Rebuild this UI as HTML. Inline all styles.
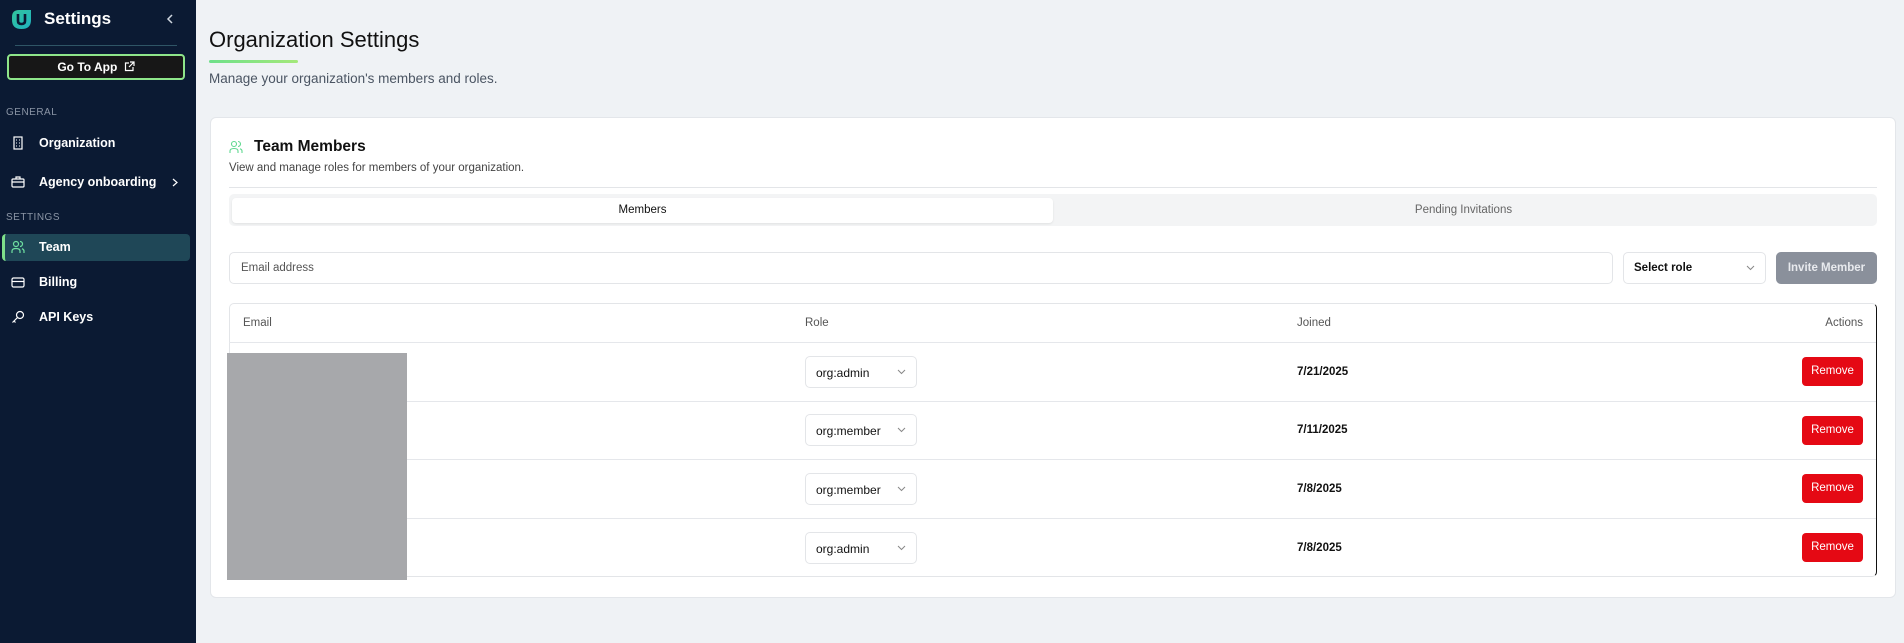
<!DOCTYPE html>
<html><head><meta charset="utf-8"><style>
*{box-sizing:border-box;margin:0;padding:0}
body{width:1904px;height:643px;overflow:hidden;background:#eff2f5;font-family:"Liberation Sans",sans-serif;position:relative}
.sb{position:absolute;left:0;top:0;width:196px;height:643px;background:#0b1a33;color:#fff}
.abs{position:absolute}
.lbl{font-size:10px;color:#8b95a5;letter-spacing:.5px}
.nav{position:absolute;left:39px;font-size:12.5px;font-weight:bold;color:#fff}
.ico{position:absolute;left:11px;width:14px;height:14px}
.card{position:absolute;left:210px;top:117px;width:1686px;height:481px;background:#fff;border:1px solid #e3e6ea;border-radius:6px}
.row{position:absolute;left:229px;width:1647px;border-top:1px solid #e5e7eb}
.sel{position:absolute;left:805px;width:112px;height:32px;border:1px solid #e3e5e8;border-radius:5px;font-size:12px;color:#111;padding:9px 0 0 10px}
.sel svg,.sr svg{position:absolute;right:10px;top:12px}
.rm{position:absolute;left:1802px;width:61px;height:29px;background:#e50914;color:#fff;border-radius:4px;font-size:11.5px;text-align:center;line-height:29px}
.dt{position:absolute;left:1297px;font-size:11.5px;font-weight:bold;color:#111}
</style></head><body>
<div class="sb">
  <svg class="abs" style="left:10px;top:8px" width="23" height="23" viewBox="0 0 23 23"><defs><linearGradient id="g" x1="0" y1="0" x2="1" y2="1"><stop offset="0" stop-color="#33c49a"/><stop offset="1" stop-color="#1fb3c2"/></linearGradient></defs><path d="M2 9 Q2 2 9 2 H21 V12 Q21 21 11.5 21 Q2 21 2 12Z" fill="url(#g)"/><path d="M8 6 V13 Q8 16 11.5 16 Q15 16 15 13 V6" stroke="#0b1a33" stroke-width="2.6" fill="none"/></svg>
  <div class="abs" style="left:44px;top:9px;font-size:17px;font-weight:bold">Settings</div>
  <svg class="abs" style="left:166px;top:14px" width="8" height="10"><path d="M6 1 L2 5 L6 9" stroke="#cfd6df" stroke-width="1.5" fill="none"/></svg>
  <div class="abs" style="left:15px;top:45px;width:162px;height:1px;background:#2f5566"></div>
  <div class="abs" style="left:7px;top:54px;width:178px;height:26px;background:#171717;border:2px solid #8ee58a;border-radius:4px;font-size:12px;font-weight:bold;text-align:center;line-height:22px">Go To App <svg width="11" height="11" viewBox="0 0 11 11" style="vertical-align:-1px;margin-left:3px"><path d="M5 2H1.5V9.5H9V6M6 1H10V5M10 1L5 6" stroke="#fff" stroke-width="1.2" fill="none"/></svg></div>
  <div class="abs lbl" style="left:6px;top:107px">GENERAL</div>
  <svg class="ico" style="top:136px" viewBox="0 0 14 14"><rect x="3" y="1" width="8" height="12" stroke="#fff" fill="none" stroke-width="1.2"/><path d="M5 4h1M8 4h1M5 7h1M8 7h1M5 10h1M8 10h1" stroke="#fff"/></svg>
  <div class="nav" style="top:136px">Organization</div>
  <svg class="ico" style="top:175px" viewBox="0 0 14 14"><rect x="1" y="4" width="12" height="8" rx="1" stroke="#fff" fill="none" stroke-width="1.2"/><path d="M5 4V2H9V4M1 7H13" stroke="#fff" stroke-width="1.2" fill="none"/></svg>
  <div class="nav" style="top:175px">Agency onboarding</div>
  <svg class="abs" style="left:172px;top:178px" width="6" height="9"><path d="M1 1L5 4.5L1 8" stroke="#fff" stroke-width="1.2" fill="none"/></svg>
  <div class="abs lbl" style="left:6px;top:212px">SETTINGS</div>
  <div class="abs" style="left:2px;top:234px;width:188px;height:27px;background:#1f4757;border-left:3px solid #7ee08a;border-radius:4px"></div>
  <svg class="ico" style="top:240px" viewBox="0 0 14 14"><circle cx="5" cy="4" r="2.5" stroke="#6fe0a0" fill="none" stroke-width="1.2"/><path d="M1 13V11Q1 8.5 5 8.5Q9 8.5 9 11V13M9 1.5A2.5 2.5 0 0 1 9 6.5M11 8.7Q13 9.5 13 11V13" stroke="#6fe0a0" fill="none" stroke-width="1.2"/></svg>
  <div class="nav" style="top:240px">Team</div>
  <svg class="ico" style="top:275px" viewBox="0 0 14 14"><rect x="1" y="3" width="12" height="9" rx="1.5" stroke="#fff" fill="none" stroke-width="1.2"/><path d="M1 6.5H13" stroke="#fff" stroke-width="1.2"/></svg>
  <div class="nav" style="top:275px">Billing</div>
  <svg class="ico" style="top:310px" viewBox="0 0 14 14"><circle cx="9" cy="5" r="3.5" stroke="#fff" fill="none" stroke-width="1.2"/><path d="M6.5 7.5L1.5 12.5M3 11L4.5 12.5" stroke="#fff" stroke-width="1.2" fill="none"/></svg>
  <div class="nav" style="top:310px">API Keys</div>
</div>

<div class="abs" style="left:209px;top:27px;font-size:22px;color:#111">Organization Settings</div>
<div class="abs" style="left:209px;top:60px;width:89px;height:3px;background:linear-gradient(90deg,#6ee08a,#a4e87a);border-radius:2px"></div>
<div class="abs" style="left:209px;top:71px;font-size:13.5px;color:#4b5563">Manage your organization's members and roles.</div>

<div class="card"></div>
<svg class="abs" style="left:229px;top:140px" width="14" height="14" viewBox="0 0 14 14"><circle cx="5" cy="4" r="2.5" stroke="#5fd88f" fill="none" stroke-width="1.1"/><path d="M1 13V11Q1 8.5 5 8.5Q9 8.5 9 11V13M9 1.5A2.5 2.5 0 0 1 9 6.5M11 8.7Q13 9.5 13 11V13" stroke="#5fd88f" fill="none" stroke-width="1.1"/></svg>
<div class="abs" style="left:254px;top:138px;font-size:15.5px;font-weight:bold;color:#111">Team Members</div>
<div class="abs" style="left:229px;top:162px;font-size:11.5px;color:#444">View and manage roles for members of your organization.</div>
<div class="abs" style="left:229px;top:187px;width:1648px;height:1px;background:#e3e5e8"></div>
<div class="abs" style="left:229px;top:194px;width:1648px;height:32px;background:#f3f4f5;border-radius:5px"></div>
<div class="abs" style="left:232px;top:198px;width:821px;height:25px;background:#fff;border-radius:4px;box-shadow:0 1px 2px rgba(0,0,0,.08);font-size:11.5px;color:#111;text-align:center;line-height:25px">Members</div>
<div class="abs" style="left:1053px;top:198px;width:821px;height:25px;font-size:11.5px;color:#666;text-align:center;line-height:25px">Pending Invitations</div>

<div class="abs" style="left:229px;top:252px;width:1384px;height:32px;border:1px solid #e3e5e8;border-radius:5px;font-size:11.5px;color:#555;padding:9px 0 0 11px">Email address</div>
<div class="abs sr" style="left:1623px;top:252px;width:143px;height:32px;border:1px solid #e3e5e8;border-radius:5px;font-size:11.5px;color:#111;padding:9px 0 0 10px;font-weight:bold">Select role<svg width="9" height="6"><path d="M1 1L4.5 4.5L8 1" stroke="#888" fill="none"/></svg></div>
<div class="abs" style="left:1776px;top:252px;width:101px;height:32px;background:#8a909b;border-radius:5px;font-size:11.5px;color:#e8eaee;text-align:center;line-height:32px;font-weight:bold">Invite Member</div>

<div class="abs" style="left:229px;top:303px;width:1648px;height:274px;border:1px solid #e3e5e8;border-right:1px solid #111;border-radius:5px"></div>
<div class="abs" style="left:243px;top:317px;font-size:11.5px;color:#555">Email</div>
<div class="abs" style="left:805px;top:317px;font-size:11.5px;color:#555">Role</div>
<div class="abs" style="left:1297px;top:317px;font-size:11.5px;color:#555">Joined</div>
<div class="abs" style="left:1810px;top:317px;font-size:11.5px;color:#555;width:53px;text-align:right">Actions</div>
<div class="row" style="top:342px"></div>
<div class="row" style="top:401px"></div>
<div class="row" style="top:459px"></div>
<div class="row" style="top:518px"></div>

<div class="sel" style="top:356px">org:admin<svg width="9" height="6"><path d="M1 1L4.5 4.5L8 1" stroke="#888" fill="none"/></svg></div>
<div class="sel" style="top:414px">org:member<svg width="9" height="6"><path d="M1 1L4.5 4.5L8 1" stroke="#888" fill="none"/></svg></div>
<div class="sel" style="top:473px">org:member<svg width="9" height="6"><path d="M1 1L4.5 4.5L8 1" stroke="#888" fill="none"/></svg></div>
<div class="sel" style="top:532px">org:admin<svg width="9" height="6"><path d="M1 1L4.5 4.5L8 1" stroke="#888" fill="none"/></svg></div>
<div class="dt" style="top:366px">7/21/2025</div>
<div class="dt" style="top:424px">7/11/2025</div>
<div class="dt" style="top:483px">7/8/2025</div>
<div class="dt" style="top:542px">7/8/2025</div>
<div class="rm" style="top:357px">Remove</div>
<div class="rm" style="top:416px">Remove</div>
<div class="rm" style="top:474px">Remove</div>
<div class="rm" style="top:533px">Remove</div>

<div class="abs" style="left:227px;top:353px;width:180px;height:227px;background:#a7a8ab"></div>
</body></html>
